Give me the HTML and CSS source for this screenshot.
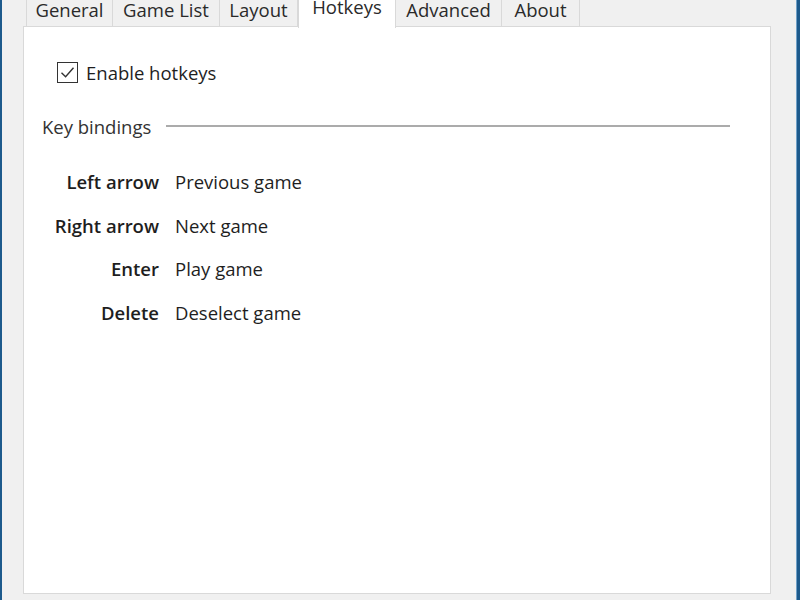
FILE: index.html
```html
<!DOCTYPE html>
<html>
<head>
<meta charset="utf-8">
<link rel="stylesheet" href="styles.css">
</head>
<body>
<div class="window">
  <div class="tabs">
    <div class="tab t-general">General</div>
    <div class="tab t-list">Game List</div>
    <div class="tab t-layout">Layout</div>
    <div class="tab t-hotkeys active">Hotkeys</div>
    <div class="tab t-adv">Advanced</div>
    <div class="tab t-about">About</div>
  </div>
  <div class="panel">
    <label class="check">
      <span class="box"><svg width="19" height="19" viewBox="0 0 19 19"><path d="M3.5 9.8 L7.6 13.8 L15.5 4.8" fill="none" stroke="#333" stroke-width="1.4"/></svg></span>
      <span>Enable hotkeys</span>
    </label>
    <div class="group">
      <span class="group-title">Key bindings</span>
      <span class="group-line"></span>
    </div>
    <div class="bindings">
      <div class="key">Left arrow</div><div class="val">Previous game</div>
      <div class="key">Right arrow</div><div class="val">Next game</div>
      <div class="key">Enter</div><div class="val">Play game</div>
      <div class="key">Delete</div><div class="val">Deselect game</div>
    </div>
  </div>
</div>
</body>
</html>
```
FILE: styles.css
```css
html, body {
  margin: 0;
  padding: 0;
  width: 800px;
  height: 600px;
  overflow: hidden;
  background: #f0f0f0;
  font-family: "Open Sans", "Noto Sans", sans-serif;
  font-size: 18.5px;
  color: #1e1e1e;
}
.window {
  box-sizing: border-box;
  width: 800px;
  height: 600px;
  border-left: 2px solid #1d5a8c;
  border-right: 3px solid #1d5a8c;
  display: flex;
  flex-direction: column;
  position: relative;
}
.window::after {
  content: "";
  position: absolute;
  right: 0;
  top: 0;
  bottom: 0;
  width: 1px;
  background: #6fa0c8;
}
.tabs {
  display: flex;
  height: 26px;
  padding-left: 24px;
  align-items: flex-start;
  position: relative;
  z-index: 1;
}
.tab {
  box-sizing: border-box;
  height: 26px;
  border-right: 1px solid #d9d9d9;
  background: #f0f0f0;
  display: flex;
  align-items: center;
  justify-content: center;
  padding-bottom: 6px;
  line-height: 18px;
  white-space: nowrap;
  color: #2a2a2a;
}
.t-general { width: 87px; border-left: 1px solid #d9d9d9; }
.t-list { width: 107px; }
.t-layout { width: 78px; }
.t-hotkeys { width: 98px; }
.t-adv { width: 106px; }
.t-about { width: 78px; }
.tab.active {
  background: #fff;
  height: 28px;
  margin-bottom: -2px;
  padding-bottom: 14px;
  line-height: 14px;
  border-left: 1px solid #d9d9d9;
}
.panel {
  flex: 1;
  margin: 0 26px 6px 21px;
  background: #fff;
  border: 1px solid #d9d9d9;
  padding: 32px 40px 0 18px;
}
.check {
  display: flex;
  align-items: center;
  gap: 8px;
  margin-left: 15px;
  height: 26px;
}
.box {
  box-sizing: border-box;
  width: 21px;
  height: 21px;
  border: 1px solid #333;
  display: flex;
  align-items: center;
  justify-content: center;
}
.box svg { display: block; }
.group {
  display: flex;
  align-items: center;
  margin-top: 28px;
  height: 26px;
}
.group-title { color: #333; }
.group-line {
  flex: 1;
  height: 2px;
  background: #ababab;
  margin-left: 15px;
}
.bindings {
  display: grid;
  grid-template-columns: 117px auto;
  column-gap: 16px;
  row-gap: 15.6px;
  margin-top: 29px;
  justify-content: start;
}
.key {
  text-align: right;
  font-weight: 600;
  line-height: 28px;
  color: #1e1e1e;
}
.val {
  line-height: 28px;
}
```
